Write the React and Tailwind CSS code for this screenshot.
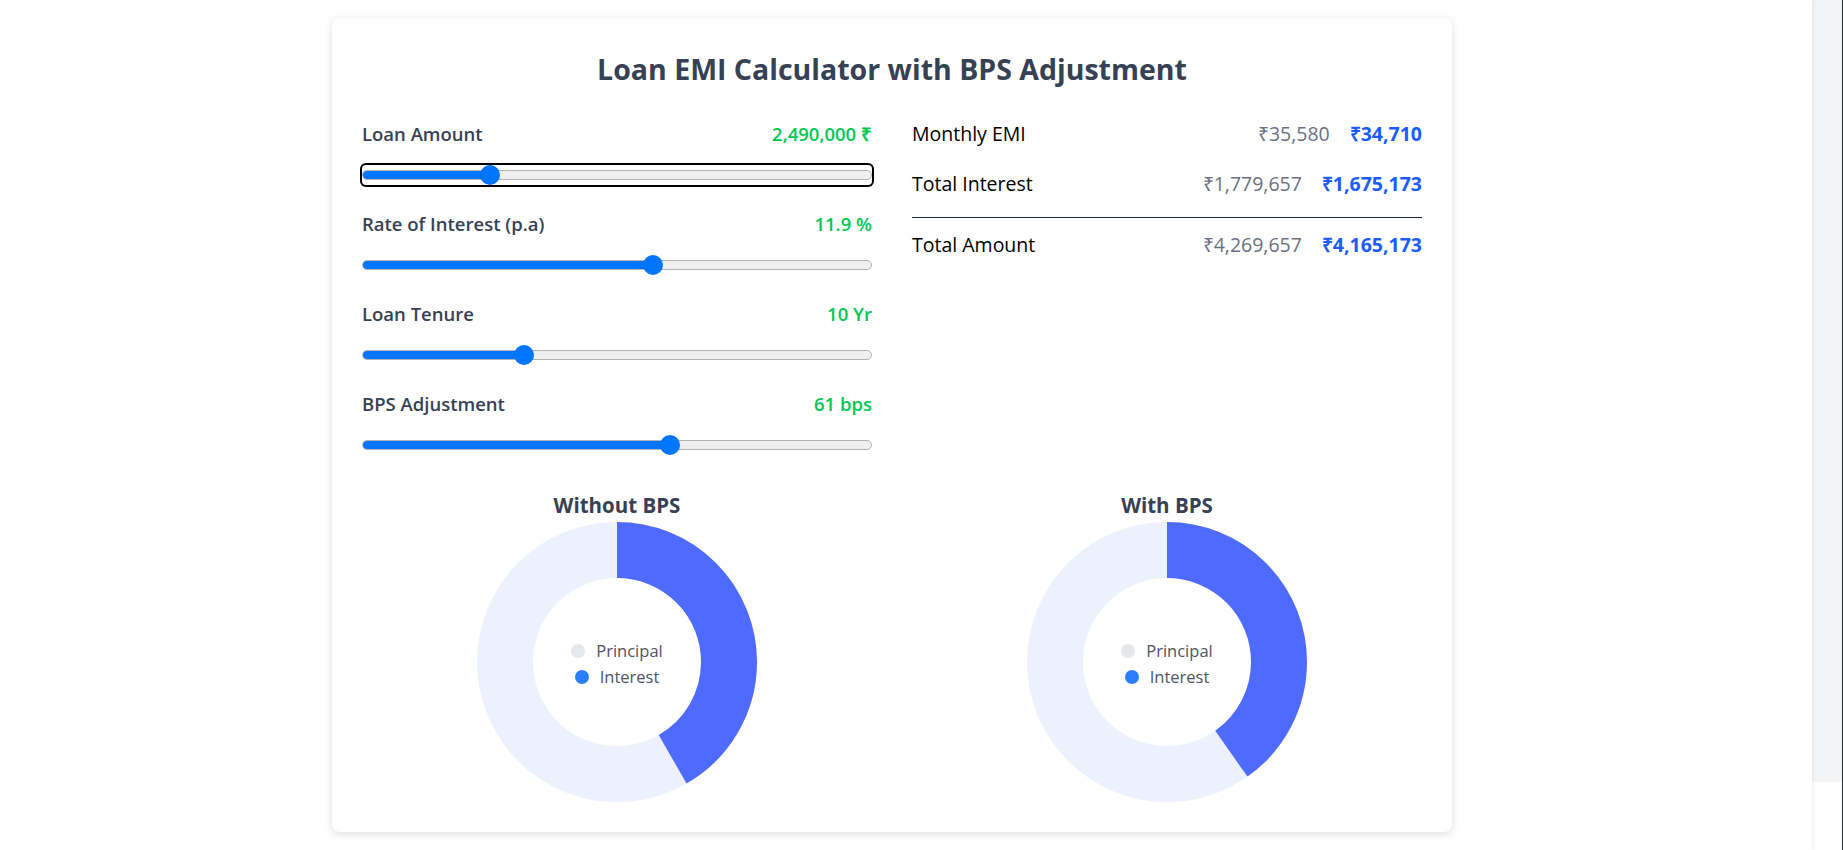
import React from 'react';

const font = { fontFamily: '"Segoe UI", "Open Sans", sans-serif' };

const sliders = [
  { label: 'Loan Amount', value: '2,490,000 ₹', pct: 0.2414, focused: true },
  { label: 'Rate of Interest (p.a)', value: '11.9 %', pct: 0.5737 },
  { label: 'Loan Tenure', value: '10 Yr', pct: 0.3103 },
  { label: 'BPS Adjustment', value: '61 bps', pct: 0.608 },
];

// simple range look-alike (chrome default style)
const Slider = ({ pct, focused }) => (
  <div
    className={
      'relative h-5 w-full flex items-center mt-[17px] ' +
      (focused ? 'ring-2 ring-black rounded-[4px]' : '')
    }
  >
    <div className="h-[10px] w-full rounded-full border border-[#b2b2b2] bg-[#efefef] overflow-hidden">
      <div className="h-full bg-[#0075ff]" style={{ width: `calc(${pct} * (100% - 20px) + 10px)` }} />
    </div>
    <div
      className="absolute top-0 h-5 w-5 rounded-full bg-[#0075ff]"
      style={{ left: `calc(${pct} * (100% - 20px))` }}
    />
  </div>
);

const Donut = ({ title, interest, total }) => {
  const r = 112;
  const c = 2 * Math.PI * r;
  const arc = (interest / total) * c;
  return (
    <div className="flex flex-col items-center">
      <h3 className="text-[20.5px] leading-7 font-bold text-gray-700">{title}</h3>
      <div className="relative mt-[3px] h-[280px] w-[280px]">
        <svg width="280" height="280" viewBox="0 0 280 280">
          <circle cx="140" cy="140" r={r} fill="none" stroke="#edf1fd" strokeWidth="56" />
          <circle
            cx="140"
            cy="140"
            r={r}
            fill="none"
            stroke="#4f6bff"
            strokeWidth="56"
            strokeDasharray={`${arc} ${c}`}
            transform="rotate(-90 140 140)"
          />
        </svg>
        <div className="absolute inset-0 flex flex-col items-center justify-center pt-[4px] text-[16.5px] leading-[26px] text-gray-600">
          <div className="flex items-center gap-[11px]">
            <span className="h-[14px] w-[14px] rounded-full bg-gray-200" />
            <span>Principal</span>
          </div>
          <div className="flex items-center gap-[11px]">
            <span className="h-[14px] w-[14px] rounded-full bg-[#2b7fff]" />
            <span>Interest</span>
          </div>
        </div>
      </div>
    </div>
  );
};

const Row = ({ label, oldV, newV, className = '' }) => (
  <div className={'flex items-center justify-between h-7 text-[19.5px] ' + className}>
    <span className="text-black">{label}</span>
    <div className="flex items-center gap-5">
      <span className="text-gray-500">{oldV}</span>
      <span className="font-bold text-[#1a5cff]">{newV}</span>
    </div>
  </div>
);

const App = () => {
  return (
    <div className="flex min-h-[850px] bg-white" style={font}>
      <main className="relative z-10 flex flex-1 justify-center pt-[18px] pr-[28px] shadow-[2px_0_3px_rgba(0,0,0,0.05)]">
        <div className="h-[814px] w-[1120px] rounded-lg bg-white px-[30px] pt-[33px] shadow-[0_2px_8px_rgba(0,0,0,0.13)]">
          <h1 className="text-center text-[28.5px] leading-9 font-bold text-gray-700">
            Loan EMI Calculator with BPS Adjustment
          </h1>

          <div className="mt-[33px] grid grid-cols-2 gap-10">
            {/* inputs */}
            <div className="flex flex-col gap-[25px]">
              {sliders.map((s) => (
                <div key={s.label}>
                  <div className="flex h-7 items-center justify-between text-[18.5px]">
                    <span className="font-semibold text-gray-700">{s.label}</span>
                    <span className="font-semibold text-[#00c853]">{s.value}</span>
                  </div>
                  <Slider pct={s.pct} focused={s.focused} />
                </div>
              ))}
            </div>

            {/* results */}
            <div>
              <Row label="Monthly EMI" oldV="₹35,580" newV="₹34,710" />
              <Row label="Total Interest" oldV="₹1,779,657" newV="₹1,675,173" className="mt-[22px]" />
              <div className="mt-[19px] border-t border-gray-800" />
              <Row label="Total Amount" oldV="₹4,269,657" newV="₹4,165,173" className="mt-[13px]" />
            </div>
          </div>

          <div className="mt-9 grid grid-cols-2 gap-10">
            <Donut title="Without BPS" interest={1779657} total={4269657} />
            <Donut title="With BPS" interest={1675173} total={4165173} />
          </div>
        </div>
      </main>
      <div className="h-[782px] w-[30px] bg-gray-100" />
      <div className="w-px bg-gray-800" />
    </div>
  );
};

export default App;
